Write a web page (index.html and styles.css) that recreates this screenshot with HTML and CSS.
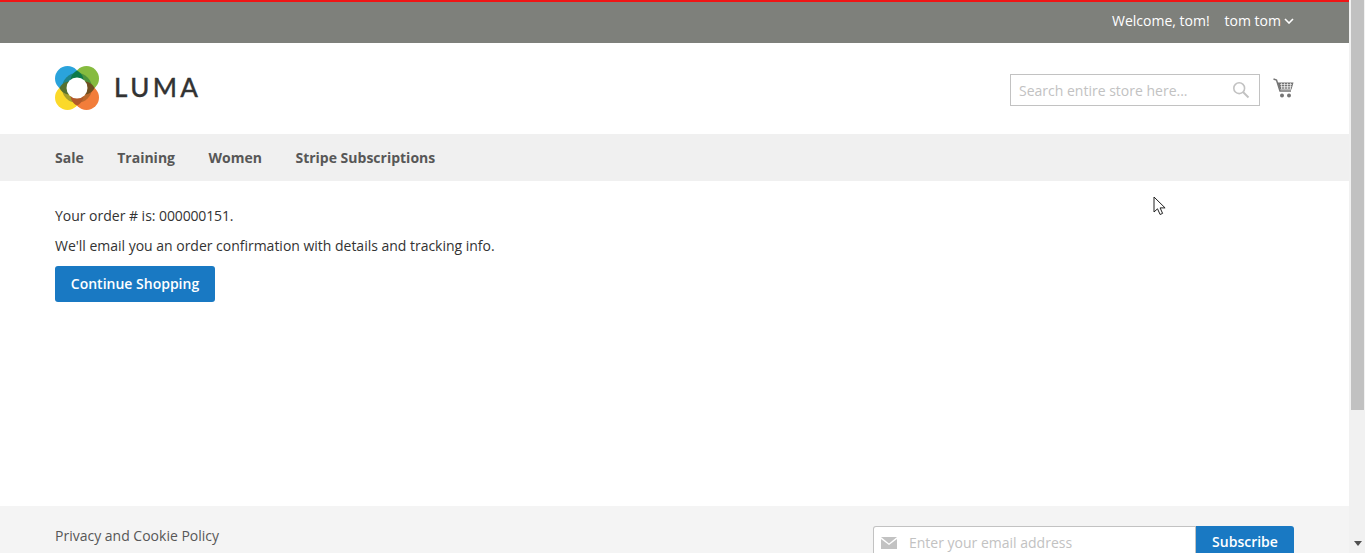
FILE: index.html
```html
<!DOCTYPE html>
<html lang="en">
<head>
<meta charset="utf-8">
<title>Success Page</title>
<link rel="stylesheet" href="styles.css">
</head>
<body>
<div class="viewport">
  <div class="page">
    <header>
      <div class="topbar">
        <span>Welcome, tom!</span>
        <span class="account">tom tom
          <svg class="chev" width="10" height="6" viewBox="0 0 10 6"><path d="M1 1l4 4 4-4" fill="none" stroke="#fff" stroke-width="1.6"/></svg>
        </span>
      </div>
      <div class="brandbar">
        <a class="logo">
          <svg width="44" height="44" viewBox="0 0 44 44">
            <circle cx="12.500" cy="12.500" r="12.500" fill="#2aa3dc"/>
            <circle cx="31.500" cy="12.500" r="12.500" fill="#86bb3f"/>
            <circle cx="12.500" cy="31.500" r="12.500" fill="#fbd92a"/>
            <circle cx="31.500" cy="31.500" r="12.500" fill="#f27d3a"/>
            <path d="M22 7a15 15 0 0 0-15 15h6l9-9z" fill="#1c7a72" opacity=".8"/>
            <path d="M22 7a15 15 0 0 1 15 15h-6l-9-9z" fill="#3e8a3c" opacity=".8"/>
            <path d="M7 22a15 15 0 0 0 15 15v-6l-9-9z" fill="#97942e" opacity=".85"/>
            <path d="M37 22a15 15 0 0 1-15 15v-6l9-9z" fill="#b0642a" opacity=".85"/>
            <path d="M22 4.400C25 6 28 9 28.500 14L22 17l-6.500-3C16 9 19 6 22 4.400z" fill="#0c7a4a"/>
            <path d="M4.400 22C6 19 9 16 14 15.500L17 22l-3 6.500C9 28 6 25 4.400 22z" fill="#55702f"/>
            <path d="M39.600 22C38 19 35 16 30 15.500L27 22l3 6.500C35 28 38 25 39.600 22z" fill="#6f4f20"/>
            <path d="M22 39.600C25 38 28 35 28.500 30L22 27l-6.500 3C16 35 19 38 22 39.600z" fill="#b2592a"/>
            <circle cx="22" cy="22" r="10.500" fill="#fff"/>
          </svg>
          <span class="wordmark">LUMA</span>
        </a>
        <div class="tools">
          <div class="search">
            <span class="ph">Search entire store here...</span>
            <svg width="18" height="18" viewBox="0 0 18 18"><circle cx="7.200" cy="7.200" r="5.400" fill="none" stroke="#c2c2c2" stroke-width="1.600"/><path d="M11 11l5.500 5.500" stroke="#c2c2c2" stroke-width="2"/></svg>
          </div>
          <svg class="cart" width="21" height="21" viewBox="0 0 21 21">
            <path d="M0.500 1l3 1 3.500 11h11" fill="none" stroke="#757575" stroke-width="1.500"/>
            <path d="M4.500 4.500h16l-2 7h-11.700z" fill="#757575"/>
            <path d="M7 6.500h12M7.500 8.500h11M8 10h10M8.500 5v6M11.500 5v6M14.500 5v6M17.500 5v6" stroke="#fff" stroke-width=".6"/>
            <circle cx="9" cy="17.500" r="2" fill="#757575"/><circle cx="16" cy="17.500" r="2" fill="#757575"/>
          </svg>
        </div>
      </div>
      <nav class="nav">
        <a>Sale</a><a>Training</a><a>Women</a><a>Stripe Subscriptions</a>
      </nav>
    </header>
    <main class="content">
      <p class="line tight">Your order # is: <span>000000151</span>.</p>
      <p class="line">We'll email you an order confirmation with details and tracking info.</p>
      <a class="btn continue">Continue Shopping</a>
    </main>
    <footer class="footer">
      <a class="policy">Privacy and Cookie Policy</a>
      <div class="newsletter">
        <div class="email">
          <svg width="16" height="12" viewBox="0 0 16 12"><path d="M0 0h16L8 6.500z" fill="#c2c2c2"/><path d="M0 2l8 6 8-6v10H0z" fill="#c2c2c2"/></svg>
          <span class="ph">Enter your email address</span>
        </div>
        <a class="btn subscribe">Subscribe</a>
      </div>
    </footer>
    <svg class="pointer" width="14" height="20" viewBox="0 0 14 20"><path d="M1 1v15l3.500-3.200 2.600 5.700 2.500-1.100-2.500-5.500h5z" fill="#fff" stroke="#222" stroke-width="1"/></svg>
  </div>
  <div class="scrollbar">
    <div class="thumb"></div>
    <svg class="down" width="8" height="5" viewBox="0 0 8 5"><path d="M0 0h8L4 5z" fill="#505050"/></svg>
  </div>
</div>
</body>
</html>
```
FILE: styles.css
```css
* { box-sizing: border-box; }
html, body { margin: 0; height: 553px; overflow: hidden; }
body { font-family: "Open Sans", "Liberation Sans", sans-serif; font-size: 14px; color: #333; background: #fff; }
.viewport { display: flex; height: 553px; }
.page { position: relative; width: 1349px; height: 553px; overflow: hidden; }
.topbar { height: 43px; padding: 0 55px 4px; background: #7e807b; border-top: 2px solid #f01515; color: #fff; display: flex; justify-content: flex-end; align-items: center; gap: 15px; font-size: 14px; }
.account { display: flex; align-items: center; gap: 3px; }
.brandbar { height: 91px; padding: 0 55px; display: flex; justify-content: space-between; align-items: center; }
.logo { display: flex; align-items: center; gap: 15px; margin-top: -2px; }
.wordmark { font-family: "Lato", "Liberation Sans", sans-serif; font-weight: 500; font-size: 26px; letter-spacing: 3.400px; color: #333; -webkit-text-stroke: .3px #333; margin-top: -2px; }
.tools { display: flex; align-items: center; gap: 13px; margin-top: 2px; }
.search { width: 250px; height: 32px; border: 1px solid #c2c2c2; padding: 0 9px 0 8px; display: flex; align-items: center; justify-content: space-between; }
.search .ph { margin-top: 1px; }
.ph { color: #c2c2c2; font-size: 14px; }
.cart { margin-bottom: 2px; }
.nav { height: 47px; background: #f0f0f0; padding: 0 55px; display: flex; align-items: center; gap: 33.500px; font-weight: 700; font-size: 14px; color: #575757; }
.content { height: 325px; padding: 25px 55px 0; }
.line { margin: 0 0 10px; line-height: 20px; letter-spacing: -.015px; }
.tight span { letter-spacing: -.15px; }
.btn { display: inline-flex; align-items: center; justify-content: center; background: #1979c3; color: #fff; font-weight: 600; }
.continue { width: 160px; height: 36px; border-radius: 3px; padding-bottom: 2px; font-size: 14px; }
.footer { height: 47px; background: #f4f4f4; padding: 20px 55px 0; display: flex; justify-content: space-between; align-items: flex-start; }
.policy { color: #575757; }
.newsletter { display: flex; width: 421px; height: 40px; }
.email { flex: 1; border: 1px solid #c2c2c2; border-bottom: 0; border-radius: 3px 0 0 0; background: #fff; padding: 6px 0 0 7px; display: flex; gap: 12px; align-items: flex-start; }
.email svg { margin-top: 4px; }
.email .ph { line-height: 19px; }
.subscribe { width: 98px; height: 40px; border-radius: 0 3px 0 0; padding-bottom: 9px; }
.pointer { position: absolute; left: 1153px; top: 196px; }
.scrollbar { position: relative; width: 16px; height: 553px; background: #f1f1f1; }
.thumb { position: absolute; left: 2px; right: 1px; top: 0; height: 410px; background: #c1c1c1; }
.down { position: absolute; left: 5px; bottom: 7px; }
```
